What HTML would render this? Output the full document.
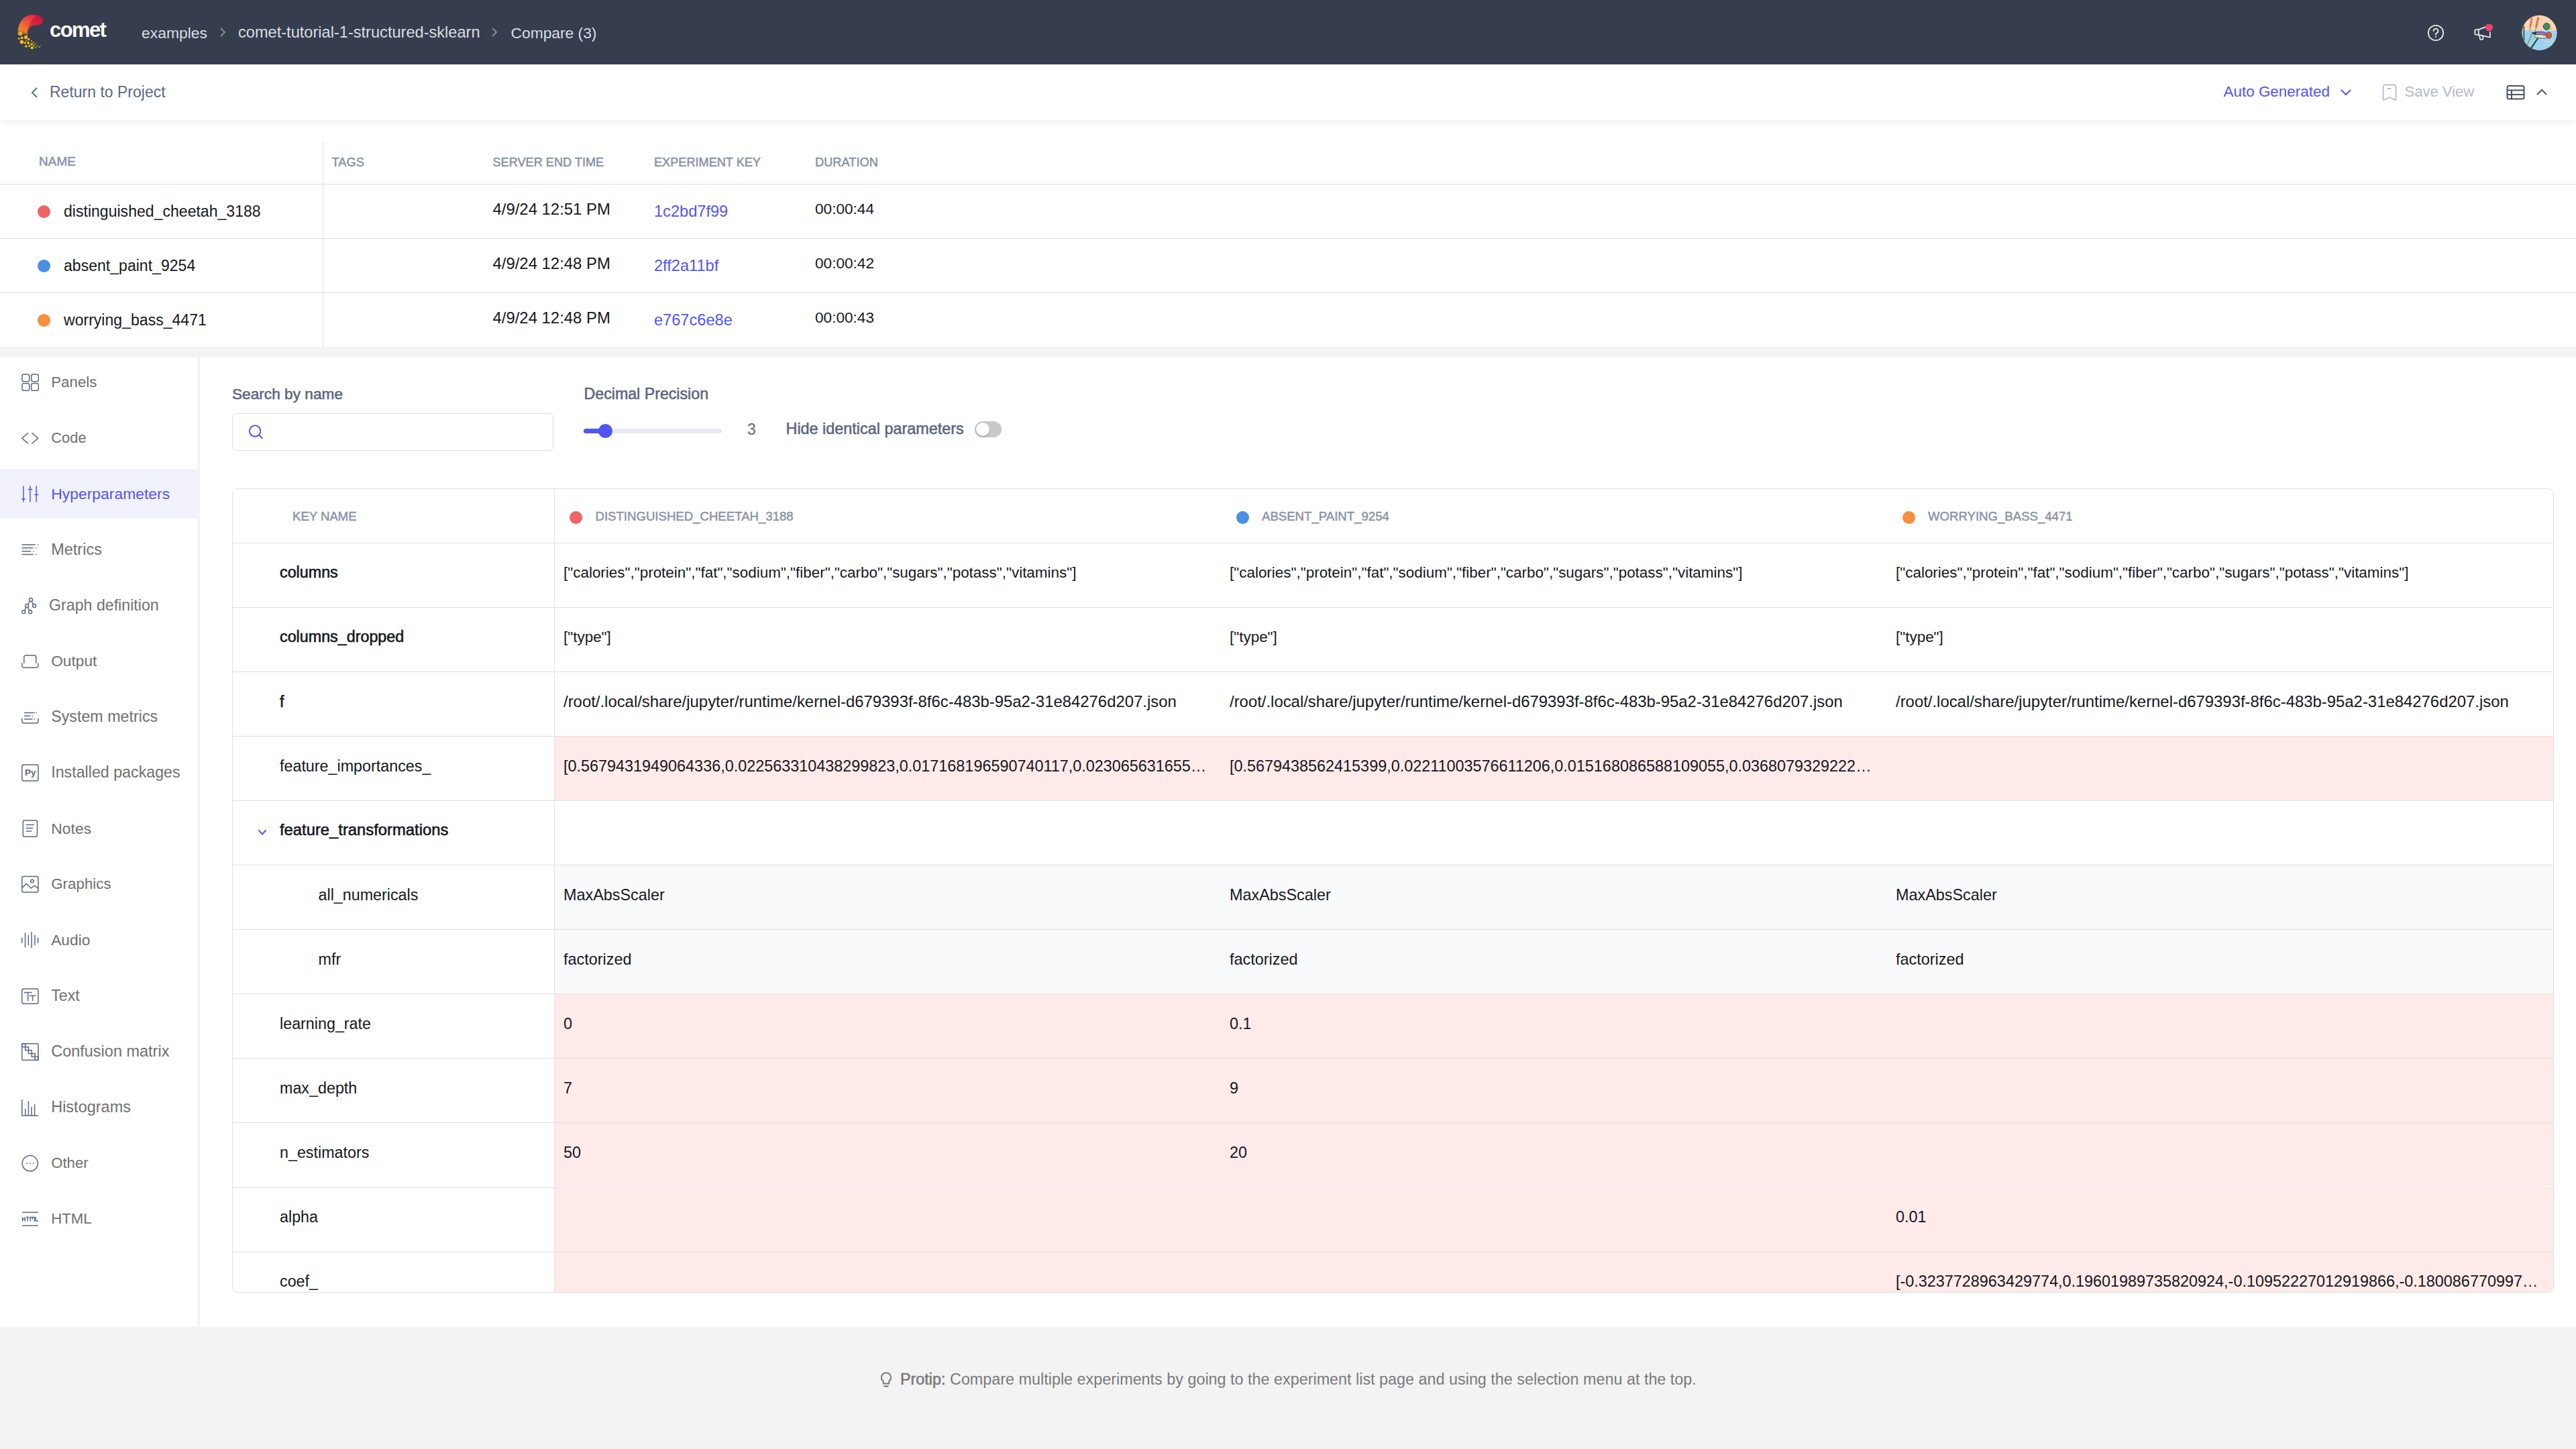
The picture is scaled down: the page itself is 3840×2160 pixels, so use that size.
<!DOCTYPE html>
<html><head><meta charset="utf-8"><title>Comet - Compare</title><style>
*{margin:0;padding:0;box-sizing:border-box}
html,body{width:3840px;height:2160px;overflow:hidden;background:#fff;font-family:"Liberation Sans",sans-serif}
.t{position:absolute;white-space:nowrap;line-height:0}
.r{position:absolute;display:block}
</style></head>
<body>
<div class="r" style="left:0px;top:0px;width:3840px;height:96px;background:#363d4e;"></div>
<svg class="r" style="left:20px;top:16px;" width="50" height="62" viewBox="20 16 50 62"><defs><linearGradient id="lg" gradientUnits="userSpaceOnUse" x1="30" y1="50" x2="52" y2="20"><stop offset="0" stop-color="#f5981f"/><stop offset="0.5" stop-color="#f0543a"/><stop offset="1" stop-color="#ea1a48"/></linearGradient><linearGradient id="lgd" gradientUnits="userSpaceOnUse" x1="0" y1="49" x2="0" y2="73"><stop offset="0" stop-color="#f0a820"/><stop offset="1" stop-color="#ffd500"/></linearGradient></defs><path d="M26.7 47 C27 38 31 30 37.5 25.3 C42 22.5 47 21.8 51 22 C56 22.2 60 23.5 62.5 26 C65 28.5 64.6 33 61.5 35.6 C59.5 37.4 57 37.9 54.5 37.4 C50.5 36.8 46 38.6 43.3 42 C41.5 44.3 40.8 47 40.7 50 C37 51.5 30 50.5 26.7 47z" fill="url(#lg)"/><path d="M56 22.8 C50 26 45.5 32 43 39 C42.2 41.5 41.5 44 41.2 46.5 C41.6 44.6 42.2 43.2 43.3 42 C46 38.6 50.5 36.8 54.5 37.4 C57 37.9 59.5 37.4 61.5 35.6 C64.6 33 65 28.5 62.5 26 C60.7 24.2 58.5 23.2 56 22.8z" fill="#a8103a" opacity="0.45"/><circle cx="30.2" cy="49.8" r="3.8" fill="url(#lgd)" stroke="#363d4e" stroke-width="0.7"/><circle cx="36" cy="49.2" r="1.5" fill="url(#lgd)" stroke="#363d4e" stroke-width="0.7"/><circle cx="40.4" cy="51.2" r="1.2" fill="url(#lgd)" stroke="#363d4e" stroke-width="0.7"/><circle cx="38.6" cy="55.6" r="2.8" fill="url(#lgd)"/><circle cx="32.8" cy="56.5" r="2" fill="url(#lgd)"/><circle cx="28.2" cy="57.4" r="1.5" fill="url(#lgd)"/><circle cx="42.7" cy="58.8" r="1.75" fill="url(#lgd)"/><circle cx="32.5" cy="62.6" r="2.8" fill="url(#lgd)"/><circle cx="37.2" cy="63.8" r="1.6" fill="url(#lgd)"/><circle cx="42.1" cy="64" r="1.9" fill="url(#lgd)"/><circle cx="38.9" cy="60.8" r="1" fill="url(#lgd)"/><circle cx="46.8" cy="60.8" r="1" fill="url(#lgd)"/><circle cx="47.1" cy="66.1" r="1.75" fill="url(#lgd)"/><circle cx="49.4" cy="63.5" r="0.9" fill="url(#lgd)"/><circle cx="52" cy="65.5" r="0.9" fill="url(#lgd)"/><circle cx="38.9" cy="69" r="1.75" fill="url(#lgd)"/><circle cx="43.6" cy="68.4" r="1.5" fill="url(#lgd)"/><circle cx="50.3" cy="68.1" r="1.2" fill="url(#lgd)"/><circle cx="47.7" cy="71.3" r="2" fill="url(#lgd)"/><circle cx="52.9" cy="70.7" r="1" fill="url(#lgd)"/><circle cx="55.5" cy="68.4" r="0.9" fill="url(#lgd)"/><circle cx="58.7" cy="70.2" r="0.9" fill="url(#lgd)"/><circle cx="60.2" cy="67.5" r="0.6" fill="url(#lgd)"/><circle cx="54.7" cy="64" r="0.5" fill="url(#lgd)"/></svg>
<div class="t " style="left:74.00px;top:45.25px;font-size:31px;color:#ffffff;font-weight:700;letter-spacing:-1.6px;">comet</div>
<div class="t " style="left:211.00px;top:48.56px;font-size:22.9px;color:#d9dde4;">examples</div>
<div class="t " style="left:355.00px;top:48.32px;font-size:23.6px;color:#d9dde4;">comet-tutorial-1-structured-sklearn</div>
<div class="t " style="left:761.50px;top:48.60px;font-size:22.8px;color:#d9dde4;">Compare (3)</div>
<svg class="r" style="left:326px;top:40px;" width="12" height="16" viewBox="0 0 12 16"><path d="M3 2 L9 8 L3 14" fill="none" stroke="#8a91a0" stroke-width="1.8"/></svg>
<svg class="r" style="left:731px;top:40px;" width="12" height="16" viewBox="0 0 12 16"><path d="M3 2 L9 8 L3 14" fill="none" stroke="#8a91a0" stroke-width="1.8"/></svg>
<svg class="r" style="left:3617px;top:35px;" width="28" height="28" viewBox="0 0 28 28"><circle cx="14" cy="14" r="11.2" fill="none" stroke="#e8e8e8" stroke-width="1.8"/><path d="M10.6 11.2 a3.4 3.4 0 1 1 4.6 3.2 c-0.9 0.4 -1.2 1 -1.2 1.9 v0.6" fill="none" stroke="#e8e8e8" stroke-width="1.8" stroke-linecap="round"/><circle cx="14" cy="19.8" r="1.1" fill="#e8e8e8"/></svg>
<svg class="r" style="left:3686px;top:36px;" width="30" height="28" viewBox="0 0 30 28"><path d="M8.8 8.2 H5.2 a1.9 1.9 0 0 0 -1.9 1.9 V14 a1.9 1.9 0 0 0 1.9 1.9 H8.8 Z M8.8 8.2 L19.5 4.2 M25.9 11.2 V19.7 L8.8 15.9 M10 16.1 L10.8 21.6 a1.8 1.8 0 0 0 2.2 1.5 L14.4 22.8 a1.5 1.5 0 0 0 1 -1.6 L14.9 17.3" fill="none" stroke="#e8e8e8" stroke-width="1.8" stroke-linejoin="round"/><circle cx="24.4" cy="5" r="5.5" fill="#f0436a"/></svg>
<svg class="r" style="left:3759px;top:22px;" width="54" height="54" viewBox="0 0 54 54"><defs><clipPath id="av"><circle cx="26.5" cy="26.8" r="26"/></clipPath></defs><g clip-path="url(#av)"><rect width="54" height="54" fill="#fcd4b8"/><rect y="23.5" width="54" height="31" fill="#9fd2f0"/><path d="M14 4.5 l2.4 0.4 l-2.2 13.5 l-2.6 -0.3z" fill="#e5703d"/><path d="M23.5 3.5 l2.8 0.6 l-3.6 15.6 l-2.8 -0.6z" fill="#e5703d"/><path d="M13 18 l-1 6 M21.5 19.5 l-1.5 6" stroke="#3d7a3a" stroke-width="0.8"/><path d="M2.5 17 l1.6 0 l0.2 36 l-1.8 0z" fill="#1f5a30"/><path d="M11 52 l16 -23 l1.8 1 l-16 24z" fill="#1f5a30"/><path d="M6 48 l10 -22 l1.2 0.6 l-10 22z" fill="#5a9a5a"/><path d="M14 27 l9 -2 l3 3 l-3 3z" fill="#1f3a2a"/><ellipse cx="31" cy="31.5" rx="12.5" ry="3.6" fill="#e8e4c4" stroke="#24402c" stroke-width="0.8"/><path d="M21 26.5 q9 -3.5 17 1.5 l-1.5 3.2 q-8 -2.5 -15.5 -1.2z" fill="#9a6fc4" stroke="#24402c" stroke-width="0.6"/><ellipse cx="40.5" cy="30.5" rx="4.2" ry="4.8" fill="#d9592f" stroke="#24402c" stroke-width="0.6"/><circle cx="37.2" cy="17.5" r="5" fill="#3d8f63" stroke="#1f3a2a" stroke-width="0.8"/><path d="M41.5 19 l5.5 2.5 l-5.5 0.5z" fill="#e6c34a"/><path d="M33 39 q10 2 18 -1 M36 44 q6 1 12 -1" fill="none" stroke="#e9e4b0" stroke-width="0.8"/></g></svg>
<div class="r" style="left:0px;top:96px;width:3840px;height:83px;background:#ffffff;box-shadow:0 3px 10px rgba(0,0,0,0.07);z-index:2"></div>
<svg class="r" style="left:44px;top:128px;z-index:3" width="16" height="20" viewBox="0 0 16 20"><path d="M11 3 L4 10 L11 17" fill="none" stroke="#5b6785" stroke-width="1.9"/></svg>
<div class="t " style="left:74.00px;top:137.03px;font-size:23.0px;color:#5b6785;z-index:3">Return to Project</div>
<div class="t " style="left:3314.50px;top:137.22px;font-size:22.45px;color:#5155f5;z-index:3">Auto Generated</div>
<svg class="r" style="left:3487px;top:130px;z-index:3" width="20" height="14" viewBox="0 0 20 14"><path d="M3 4 L10 11 L17 4" fill="none" stroke="#5155f5" stroke-width="2"/></svg>
<svg class="r" style="left:3549px;top:124px;z-index:3" width="26" height="28" viewBox="0 0 26 28"><path d="M3.5 6 a3.5 3.5 0 0 1 3.5 -3.5 h12 a3.5 3.5 0 0 1 3.5 3.5 v18 a1 1 0 0 1 -1.5 0.9 L13 21 L5 24.9 a1 1 0 0 1 -1.5 -0.9z" fill="none" stroke="#b8bfd1" stroke-width="1.9"/><path d="M9.5 8 h6" stroke="#b8bfd1" stroke-width="1.9"/></svg>
<div class="t " style="left:3584.60px;top:137.37px;font-size:22.0px;color:#b4bbcd;z-index:3">Save View</div>
<svg class="r" style="left:3735px;top:126px;z-index:3" width="30" height="24" viewBox="0 0 30 24"><rect x="2.5" y="2" width="25" height="19.5" rx="2.5" fill="none" stroke="#4a5166" stroke-width="2"/><path d="M2.5 8.5 h25 M2.5 15 h25 M9 8.5 v13" stroke="#4a5166" stroke-width="2"/></svg>
<svg class="r" style="left:3779px;top:130px;z-index:3" width="20" height="14" viewBox="0 0 20 14"><path d="M3 11 L10 4 L17 11" fill="none" stroke="#555a66" stroke-width="2"/></svg>
<div class="t " style="left:58.00px;top:241.41px;font-size:19.0px;color:#8891a8;-webkit-text-stroke:0.5px #8891a8">NAME</div>
<div class="t " style="left:494.50px;top:241.66px;font-size:18.3px;color:#8891a8;-webkit-text-stroke:0.5px #8891a8">TAGS</div>
<div class="t " style="left:734.50px;top:241.71px;font-size:18.15px;color:#8891a8;-webkit-text-stroke:0.5px #8891a8">SERVER END TIME</div>
<div class="t " style="left:975.00px;top:241.71px;font-size:18.15px;color:#8891a8;-webkit-text-stroke:0.5px #8891a8">EXPERIMENT KEY</div>
<div class="t " style="left:1215.00px;top:241.67px;font-size:18.25px;color:#8891a8;-webkit-text-stroke:0.5px #8891a8">DURATION</div>
<div class="r" style="left:0px;top:274px;width:3840px;height:1px;background:#e0e0e0;"></div>
<div class="r" style="left:0px;top:355px;width:3840px;height:1px;background:#e0e0e0;"></div>
<div class="r" style="left:0px;top:436px;width:3840px;height:1px;background:#e0e0e0;"></div>
<div class="r" style="left:481px;top:211px;width:1px;height:306px;background:#e0e0e0;"></div>
<div class="r" style="left:56px;top:306px;width:19px;height:19px;border-radius:50%;background:#ef6464"></div>
<div class="t " style="left:95.00px;top:314.50px;font-size:23.07px;color:#16181c;">distinguished_cheetah_3188</div>
<div class="t " style="left:734.50px;top:311.71px;font-size:23.9px;color:#16181c;">4/9/24 12:51 PM</div>
<div class="t " style="left:975.00px;top:315.32px;font-size:23.6px;color:#5155f5;">1c2bd7f99</div>
<div class="t " style="left:1215.00px;top:312.16px;font-size:22.6px;color:#16181c;">00:00:44</div>
<div class="r" style="left:56px;top:387px;width:19px;height:19px;border-radius:50%;background:#4a90e2"></div>
<div class="t " style="left:95.00px;top:395.50px;font-size:23.07px;color:#16181c;">absent_paint_9254</div>
<div class="t " style="left:734.50px;top:392.71px;font-size:23.9px;color:#16181c;">4/9/24 12:48 PM</div>
<div class="t " style="left:975.00px;top:396.32px;font-size:23.6px;color:#5155f5;">2ff2a11bf</div>
<div class="t " style="left:1215.00px;top:393.16px;font-size:22.6px;color:#16181c;">00:00:42</div>
<div class="r" style="left:56px;top:468px;width:19px;height:19px;border-radius:50%;background:#f98e3c"></div>
<div class="t " style="left:95.00px;top:476.50px;font-size:23.07px;color:#16181c;">worrying_bass_4471</div>
<div class="t " style="left:734.50px;top:473.71px;font-size:23.9px;color:#16181c;">4/9/24 12:48 PM</div>
<div class="t " style="left:975.00px;top:477.32px;font-size:23.6px;color:#5155f5;">e767c6e8e</div>
<div class="t " style="left:1215.00px;top:474.16px;font-size:22.6px;color:#16181c;">00:00:43</div>
<div class="r" style="left:0px;top:517px;width:3840px;height:16px;background:#f3f3f3;"></div>
<div class="r" style="left:294px;top:533px;width:4px;height:1445px;background:#f3f3f3;"></div>
<div class="r" style="left:0px;top:1978px;width:3840px;height:182px;background:#f3f3f3;"></div>
<div class="r" style="left:0px;top:699px;width:294px;height:73.5px;background:#f2f2fd;"></div>
<div class="t " style="left:76.20px;top:569.76px;font-size:22.32px;color:#707070;">Panels</div>
<svg class="r" style="left:32px;top:557.0px;" width="26" height="26" viewBox="0 0 26 26"><rect x="1" y="0.9" width="10.7" height="10.8" rx="2.6" fill="none" stroke="#5d6782" stroke-width="1.5"/><rect x="14.7" y="0.9" width="10.7" height="10.8" rx="2.6" fill="none" stroke="#5d6782" stroke-width="1.5"/><rect x="1" y="14.5" width="10.7" height="10.8" rx="2.6" fill="none" stroke="#5d6782" stroke-width="1.5"/><rect x="14.7" y="14.5" width="10.7" height="10.8" rx="2.6" fill="none" stroke="#5d6782" stroke-width="1.5"/></svg>
<div class="t " style="left:76.20px;top:653.00px;font-size:22.0px;color:#707070;">Code</div>
<svg class="r" style="left:32px;top:640.13px;" width="26" height="26" viewBox="0 0 26 26"><path d="M9.8 5.4 L0.9 13.3 L9.8 21.1 M15.6 5.4 L24.6 13.3 L15.6 21.1" fill="none" stroke="#5d6782" stroke-width="1.5"/></svg>
<div class="t " style="left:76.20px;top:735.82px;font-size:22.91px;color:#5155f5;">Hyperparameters</div>
<svg class="r" style="left:32px;top:723.26px;" width="26" height="26" viewBox="0 0 26 26"><path d="M3 1.2 V25.6 M12.9 1.2 V25.6 M22.2 1.2 V25.6 M0 20.8 H6 M10 6.5 H16 M19.2 14.4 H25.4" fill="none" stroke="#5155f5" stroke-width="1.5" stroke-width="1.7"/></svg>
<div class="t " style="left:76.20px;top:818.74px;font-size:23.5px;color:#707070;">Metrics</div>
<svg class="r" style="left:32px;top:806.39px;" width="26" height="26" viewBox="0 0 26 26"><path d="M0.4 6 H20.9 M0.4 10.8 H17.4 M0.4 15.7 H14 M0.4 20.4 H17.9" fill="none" stroke="#5d6782" stroke-width="1.5"/><path d="M24 6 h1.4 M20.8 10.8 h1.4 M17.5 15.7 h1.4 M20.8 20.4 h1.4" fill="none" stroke="#5d6782" stroke-width="1.5"/></svg>
<div class="t " style="left:73.00px;top:901.98px;font-size:23.2px;color:#707070;">Graph definition</div>
<svg class="r" style="left:32px;top:889.52px;" width="26" height="26" viewBox="0 0 26 26"><circle cx="14" cy="4" r="2.5" fill="none" stroke="#5d6782" stroke-width="1.5"/><circle cx="8.2" cy="13.1" r="2.5" fill="none" stroke="#5d6782" stroke-width="1.5"/><circle cx="19" cy="13.1" r="2.5" fill="none" stroke="#5d6782" stroke-width="1.5"/><circle cx="3.2" cy="22.3" r="2.5" fill="none" stroke="#5d6782" stroke-width="1.5"/><circle cx="13.1" cy="22.3" r="2.5" fill="none" stroke="#5d6782" stroke-width="1.5"/><path d="M12.7 6.2 L9.5 10.9 M15.2 6.3 L17.8 10.8 M6.9 15.3 L4.5 20.1 M9.4 15.3 L11.9 20.1" fill="none" stroke="#5d6782" stroke-width="1.5"/></svg>
<div class="t " style="left:76.20px;top:985.27px;font-size:22.74px;color:#707070;">Output</div>
<svg class="r" style="left:32px;top:972.65px;" width="26" height="26" viewBox="0 0 26 26"><path d="M3.8 15.8 V6.6 a2.5 2.5 0 0 1 2.5 -2.5 H19.2 a2.5 2.5 0 0 1 2.5 2.5 V15.8" fill="none" stroke="#5d6782" stroke-width="1.5"/><path d="M0.8 15.3 V19.2 a3 3 0 0 0 3 3 H22 a3 3 0 0 0 3 -3 V15.3" fill="none" stroke="#5d6782" stroke-width="1.5"/></svg>
<div class="t " style="left:76.20px;top:1068.21px;font-size:23.27px;color:#707070;">System metrics</div>
<svg class="r" style="left:32px;top:1055.78px;" width="26" height="26" viewBox="0 0 26 26"><path d="M4 6.4 H19.8 M4 11.3 H13.4 M4 16 H16.5" fill="none" stroke="#5d6782" stroke-width="1.5"/><path d="M21.6 6.4 h1.4 M15.6 11.3 h1.4 M18.6 16 h1.4" fill="none" stroke="#5d6782" stroke-width="1.5"/><path d="M0.8 14.7 V19 a3 3 0 0 0 3 3 H22 a3 3 0 0 0 3 -3 V14.7" fill="none" stroke="#5d6782" stroke-width="1.5"/></svg>
<div class="t " style="left:76.20px;top:1151.35px;font-size:23.24px;color:#707070;">Installed packages</div>
<svg class="r" style="left:32px;top:1138.91px;" width="26" height="26" viewBox="0 0 26 26"><rect x="0.8" y="1" width="24.2" height="24" rx="2.5" fill="none" stroke="#5d6782" stroke-width="1.5"/><text x="5" y="17" font-family="Liberation Sans" font-weight="700" font-size="13.5" fill="#5d6782">Py</text></svg>
<div class="t " style="left:76.20px;top:1234.58px;font-size:22.97px;color:#707070;">Notes</div>
<svg class="r" style="left:32px;top:1222.04px;" width="26" height="26" viewBox="0 0 26 26"><rect x="2.3" y="1" width="21.2" height="24.2" rx="2.5" fill="none" stroke="#5d6782" stroke-width="1.5"/><path d="M6.7 7.5 H18.7 M6.7 12.4 H17 M6.7 17.1 H15.3" fill="none" stroke="#5d6782" stroke-width="1.5"/></svg>
<div class="t " style="left:76.20px;top:1317.91px;font-size:22.37px;color:#707070;">Graphics</div>
<svg class="r" style="left:32px;top:1305.17px;" width="26" height="26" viewBox="0 0 26 26"><rect x="0.8" y="1.4" width="24.2" height="23.6" rx="2.5" fill="none" stroke="#5d6782" stroke-width="1.5"/><circle cx="16" cy="8.5" r="2.3" fill="none" stroke="#5d6782" stroke-width="1.5"/><path d="M0.8 18.6 L7.3 12.3 L14.4 19 L19.4 15.1 L25 19.4" fill="none" stroke="#5d6782" stroke-width="1.5"/></svg>
<div class="t " style="left:76.20px;top:1400.90px;font-size:22.78px;color:#707070;">Audio</div>
<svg class="r" style="left:32px;top:1388.3px;" width="26" height="26" viewBox="0 0 26 26"><path d="M0.8 9.4 V17.9 M5.5 2.4 V24.2 M10.3 5.8 V21.1 M15.1 1.2 V25.3 M20 5.8 V21.1 M24.6 9.4 V17.9" fill="none" stroke="#5d6782" stroke-width="1.5"/></svg>
<div class="t " style="left:76.20px;top:1483.90px;font-size:23.17px;color:#707070;">Text</div>
<svg class="r" style="left:32px;top:1471.43px;" width="26" height="26" viewBox="0 0 26 26"><rect x="0.8" y="2.9" width="24.2" height="22.4" rx="2.5" fill="none" stroke="#5d6782" stroke-width="1.5"/><path d="M4.5 9.6 V8.5 H14.8 V9.6 M9.7 8.5 V21 M12.7 14.2 V13.2 H20.4 V14.2 M16.6 13.2 V21" fill="none" stroke="#5d6782" stroke-width="1.5"/></svg>
<div class="t " style="left:76.20px;top:1566.92px;font-size:23.49px;color:#707070;">Confusion matrix</div>
<svg class="r" style="left:32px;top:1554.56px;" width="26" height="26" viewBox="0 0 26 26"><rect x="0.8" y="0.8" width="24.2" height="24.5" rx="1.2" fill="none" stroke="#5d6782" stroke-width="1.5"/><rect x="0.80" y="0.80" width="4.84" height="4.9" fill="none" stroke="#5d6782" stroke-width="1.5" stroke-width="1.3"/><rect x="5.64" y="5.70" width="4.84" height="4.9" fill="none" stroke="#5d6782" stroke-width="1.5" stroke-width="1.3"/><rect x="10.48" y="10.60" width="4.84" height="4.9" fill="none" stroke="#5d6782" stroke-width="1.5" stroke-width="1.3"/><rect x="15.32" y="15.50" width="4.84" height="4.9" fill="none" stroke="#5d6782" stroke-width="1.5" stroke-width="1.3"/><rect x="20.16" y="20.40" width="4.84" height="4.9" fill="none" stroke="#5d6782" stroke-width="1.5" stroke-width="1.3"/></svg>
<div class="t " style="left:76.20px;top:1650.05px;font-size:23.49px;color:#707070;">Histograms</div>
<svg class="r" style="left:32px;top:1637.69px;" width="26" height="26" viewBox="0 0 26 26"><path d="M0.8 1 V25.1 H24.8 M5.8 25.1 V15.1 M10.4 25.1 V3.5 M15 25.1 V12.1 M19.6 25.1 V7.8" fill="none" stroke="#5d6782" stroke-width="1.5"/></svg>
<div class="t " style="left:76.20px;top:1733.62px;font-size:22.2px;color:#707070;">Other</div>
<svg class="r" style="left:32px;top:1720.82px;" width="26" height="26" viewBox="0 0 26 26"><circle cx="12.8" cy="13.2" r="11.6" fill="none" stroke="#5d6782" stroke-width="1.5"/><circle cx="8" cy="13.2" r="0.9" fill="#5d6782"/><circle cx="12.8" cy="13.2" r="0.9" fill="#5d6782"/><circle cx="17.8" cy="13.2" r="0.9" fill="#5d6782"/></svg>
<div class="t " style="left:76.20px;top:1816.74px;font-size:22.23px;color:#707070;">HTML</div>
<svg class="r" style="left:32px;top:1803.95px;" width="26" height="26" viewBox="0 0 26 26"><path d="M1.2 3.3 H24.8 M1.2 23 H24.8" fill="none" stroke="#5d6782" stroke-width="1.5" stroke-width="1.7"/><path d="M1.6 10.3 V16.4 M5.2 10.3 V16.4 M1.6 13.3 H5.2 M6.8 10.6 H11.5 M9.15 10.6 V16.4 M13.2 16.4 V10.6 H19.4 V16.4 M16.3 10.6 V13.8 M21.3 10.3 V16.1 H25" fill="none" stroke="#5d6782" stroke-width="1.5" stroke-width="1.3"/></svg>
<div class="t " style="left:346.00px;top:587.14px;font-size:22.66px;color:#5b6580;-webkit-text-stroke:0.55px #5b6580">Search by name</div>
<div class="r" style="left:346px;top:615.5px;width:479px;height:56px;border:1.5px solid #dcdfea;border-radius:6px;background:#fff"></div>
<svg class="r" style="left:369px;top:631px;" width="26" height="26" viewBox="0 0 26 26"><circle cx="11.1" cy="11.5" r="8.2" fill="none" stroke="#5155f5" stroke-width="2"/><path d="M17 17.4 L22.3 22.7" stroke="#5155f5" stroke-width="2"/></svg>
<div class="t " style="left:870.50px;top:587.46px;font-size:23.2px;color:#5b6580;-webkit-text-stroke:0.55px #5b6580">Decimal Precision</div>
<div class="r" style="left:870px;top:638.5px;width:205.5px;height:7px;background:#e8e9ee;border-radius:4px"></div>
<div class="r" style="left:870px;top:638.5px;width:32px;height:7px;background:#5155f5;border-radius:4px"></div>
<div class="r" style="left:892px;top:631.5px;width:21px;height:21px;border-radius:50%;background:#5155f5"></div>
<div class="t " style="left:1114.00px;top:639.53px;font-size:23px;color:#666666;">3</div>
<div class="t " style="left:1171.50px;top:639.39px;font-size:23.4px;color:#5b6580;-webkit-text-stroke:0.55px #5b6580">Hide identical parameters</div>
<div class="r" style="left:1452.5px;top:627.5px;width:40px;height:24px;border-radius:12px;background:#c9c9c9"></div>
<div class="r" style="left:1454.5px;top:629.5px;width:20px;height:20px;border-radius:50%;background:#fff;box-shadow:0 1px 2px rgba(0,0,0,.3)"></div>
<div class="r" style="left:346px;top:728px;width:3461px;height:1199px;border:1px solid #e0e0e0;border-radius:8px;overflow:hidden;background:#fff" id="pt">
<div class="t" style="left:89.00px;top:40.55px;font-size:18.6px;color:#8891a8;-webkit-text-stroke:0.45px #8891a8">KEY NAME</div>
<div class="t" style="left:540.50px;top:40.55px;font-size:18.6px;color:#8891a8;-webkit-text-stroke:0.45px #8891a8">DISTINGUISHED_CHEETAH_3188</div>
<div class="r" style="left:501.5px;top:32.5px;width:19px;height:19px;border-radius:50%;background:#ef6464"></div>
<div class="t" style="left:1534.00px;top:40.55px;font-size:18.6px;color:#8891a8;-webkit-text-stroke:0.45px #8891a8">ABSENT_PAINT_9254</div>
<div class="r" style="left:1496.0px;top:32.5px;width:19px;height:19px;border-radius:50%;background:#4a90e2"></div>
<div class="t" style="left:2527.00px;top:40.55px;font-size:18.6px;color:#8891a8;-webkit-text-stroke:0.45px #8891a8">WORRYING_BASS_4471</div>
<div class="r" style="left:2488.5px;top:32.5px;width:19px;height:19px;border-radius:50%;background:#f98e3c"></div>
<div class="r" style="left:0;top:80.00px;width:100%;height:1px;background:#e0e0e0"></div>
<div class="t" style="left:70px;top:124.42px;font-size:23.3px;color:#16181c;-webkit-text-stroke:0.6px #16181c">columns</div>
<div class="t" style="left:493px;top:125.22px;font-size:22.45px;color:#16181c;width:959px;overflow:hidden;text-overflow:ellipsis;line-height:30px;margin-top:-15px">[&quot;calories&quot;,&quot;protein&quot;,&quot;fat&quot;,&quot;sodium&quot;,&quot;fiber&quot;,&quot;carbo&quot;,&quot;sugars&quot;,&quot;potass&quot;,&quot;vitamins&quot;]</div>
<div class="t" style="left:1486px;top:125.22px;font-size:22.45px;color:#16181c;width:959px;overflow:hidden;text-overflow:ellipsis;line-height:30px;margin-top:-15px">[&quot;calories&quot;,&quot;protein&quot;,&quot;fat&quot;,&quot;sodium&quot;,&quot;fiber&quot;,&quot;carbo&quot;,&quot;sugars&quot;,&quot;potass&quot;,&quot;vitamins&quot;]</div>
<div class="t" style="left:2479px;top:125.22px;font-size:22.45px;color:#16181c;width:967px;overflow:hidden;text-overflow:ellipsis;line-height:30px;margin-top:-15px">[&quot;calories&quot;,&quot;protein&quot;,&quot;fat&quot;,&quot;sodium&quot;,&quot;fiber&quot;,&quot;carbo&quot;,&quot;sugars&quot;,&quot;potass&quot;,&quot;vitamins&quot;]</div>
<div class="r" style="left:0;top:176.05px;width:100%;height:1px;background:#e0e0e0"></div>
<div class="t" style="left:70px;top:220.47px;font-size:23.3px;color:#16181c;-webkit-text-stroke:0.6px #16181c">columns_dropped</div>
<div class="t" style="left:493px;top:221.27px;font-size:22.45px;color:#16181c;width:959px;overflow:hidden;text-overflow:ellipsis;line-height:30px;margin-top:-15px">[&quot;type&quot;]</div>
<div class="t" style="left:1486px;top:221.27px;font-size:22.45px;color:#16181c;width:959px;overflow:hidden;text-overflow:ellipsis;line-height:30px;margin-top:-15px">[&quot;type&quot;]</div>
<div class="t" style="left:2479px;top:221.27px;font-size:22.45px;color:#16181c;width:967px;overflow:hidden;text-overflow:ellipsis;line-height:30px;margin-top:-15px">[&quot;type&quot;]</div>
<div class="r" style="left:0;top:272.10px;width:100%;height:1px;background:#e0e0e0"></div>
<div class="t" style="left:70px;top:316.52px;font-size:23.3px;color:#16181c;-webkit-text-stroke:0.6px #16181c">f</div>
<div class="t" style="left:493px;top:316.81px;font-size:23.9px;color:#16181c;width:959px;overflow:hidden;text-overflow:ellipsis;line-height:30px;margin-top:-15px">/root/.local/share/jupyter/runtime/kernel-d679393f-8f6c-483b-95a2-31e84276d207.json</div>
<div class="t" style="left:1486px;top:316.81px;font-size:23.9px;color:#16181c;width:959px;overflow:hidden;text-overflow:ellipsis;line-height:30px;margin-top:-15px">/root/.local/share/jupyter/runtime/kernel-d679393f-8f6c-483b-95a2-31e84276d207.json</div>
<div class="t" style="left:2479px;top:316.81px;font-size:23.9px;color:#16181c;width:967px;overflow:hidden;text-overflow:ellipsis;line-height:30px;margin-top:-15px">/root/.local/share/jupyter/runtime/kernel-d679393f-8f6c-483b-95a2-31e84276d207.json</div>
<div class="r" style="left:479px;top:368.15px;width:2981px;height:96px;background:#ffeaea"></div>
<div class="r" style="left:0;top:368.15px;width:100%;height:1px;background:#e0e0e0"></div>
<div class="t" style="left:70px;top:412.57px;font-size:23.3px;color:#16181c;">feature_importances_</div>
<div class="t" style="left:493px;top:413.04px;font-size:23.4px;color:#16181c;width:959px;overflow:hidden;text-overflow:ellipsis;line-height:30px;margin-top:-15px">[0.5679431949064336,0.022563310438299823,0.017168196590740117,0.023065631655878123,0.0112]</div>
<div class="t" style="left:1486px;top:413.04px;font-size:23.4px;color:#16181c;width:959px;overflow:hidden;text-overflow:ellipsis;line-height:30px;margin-top:-15px">[0.5679438562415399,0.02211003576611206,0.015168086588109055,0.03680793292221356,0.0112]</div>
<div class="r" style="left:0;top:464.20px;width:100%;height:1px;background:#e0e0e0"></div>
<div class="t" style="left:70px;top:508.45px;font-size:23.8px;color:#16181c;-webkit-text-stroke:0.6px #16181c">feature_transformations</div>
<div class="r" style="left:479px;top:560.25px;width:2981px;height:96px;background:#f9fafc"></div>
<div class="r" style="left:0;top:560.25px;width:100%;height:1px;background:#e0e0e0"></div>
<div class="t" style="left:127.5px;top:604.67px;font-size:23.3px;color:#16181c;">all_numericals</div>
<div class="t" style="left:493px;top:605.14px;font-size:23.4px;color:#16181c;width:959px;overflow:hidden;text-overflow:ellipsis;line-height:30px;margin-top:-15px">MaxAbsScaler </div>
<div class="t" style="left:1486px;top:605.14px;font-size:23.4px;color:#16181c;width:959px;overflow:hidden;text-overflow:ellipsis;line-height:30px;margin-top:-15px">MaxAbsScaler </div>
<div class="t" style="left:2479px;top:605.14px;font-size:23.4px;color:#16181c;width:967px;overflow:hidden;text-overflow:ellipsis;line-height:30px;margin-top:-15px">MaxAbsScaler </div>
<div class="r" style="left:479px;top:656.30px;width:2981px;height:96px;background:#f9fafc"></div>
<div class="r" style="left:0;top:656.30px;width:100%;height:1px;background:#e0e0e0"></div>
<div class="t" style="left:127.5px;top:700.72px;font-size:23.3px;color:#16181c;">mfr</div>
<div class="t" style="left:493px;top:701.19px;font-size:23.4px;color:#16181c;width:959px;overflow:hidden;text-overflow:ellipsis;line-height:30px;margin-top:-15px">factorized</div>
<div class="t" style="left:1486px;top:701.19px;font-size:23.4px;color:#16181c;width:959px;overflow:hidden;text-overflow:ellipsis;line-height:30px;margin-top:-15px">factorized</div>
<div class="t" style="left:2479px;top:701.19px;font-size:23.4px;color:#16181c;width:967px;overflow:hidden;text-overflow:ellipsis;line-height:30px;margin-top:-15px">factorized</div>
<div class="r" style="left:479px;top:752.35px;width:2981px;height:96px;background:#ffeaea"></div>
<div class="r" style="left:0;top:752.35px;width:100%;height:1px;background:#e0e0e0"></div>
<div class="t" style="left:70px;top:796.77px;font-size:23.3px;color:#16181c;">learning_rate</div>
<div class="t" style="left:493px;top:797.24px;font-size:23.4px;color:#16181c;width:959px;overflow:hidden;text-overflow:ellipsis;line-height:30px;margin-top:-15px">0</div>
<div class="t" style="left:1486px;top:797.24px;font-size:23.4px;color:#16181c;width:959px;overflow:hidden;text-overflow:ellipsis;line-height:30px;margin-top:-15px">0.1</div>
<div class="r" style="left:479px;top:848.40px;width:2981px;height:96px;background:#ffeaea"></div>
<div class="r" style="left:0;top:848.40px;width:100%;height:1px;background:#e0e0e0"></div>
<div class="t" style="left:70px;top:892.82px;font-size:23.3px;color:#16181c;">max_depth</div>
<div class="t" style="left:493px;top:893.29px;font-size:23.4px;color:#16181c;width:959px;overflow:hidden;text-overflow:ellipsis;line-height:30px;margin-top:-15px">7</div>
<div class="t" style="left:1486px;top:893.29px;font-size:23.4px;color:#16181c;width:959px;overflow:hidden;text-overflow:ellipsis;line-height:30px;margin-top:-15px">9</div>
<div class="r" style="left:479px;top:944.45px;width:2981px;height:96px;background:#ffeaea"></div>
<div class="r" style="left:0;top:944.45px;width:100%;height:1px;background:#e0e0e0"></div>
<div class="t" style="left:70px;top:988.87px;font-size:23.3px;color:#16181c;">n_estimators</div>
<div class="t" style="left:493px;top:989.34px;font-size:23.4px;color:#16181c;width:959px;overflow:hidden;text-overflow:ellipsis;line-height:30px;margin-top:-15px">50</div>
<div class="t" style="left:1486px;top:989.34px;font-size:23.4px;color:#16181c;width:959px;overflow:hidden;text-overflow:ellipsis;line-height:30px;margin-top:-15px">20</div>
<div class="r" style="left:479px;top:1040.50px;width:2981px;height:96px;background:#ffeaea"></div>
<div class="r" style="left:0;top:1040.50px;width:100%;height:1px;background:#e0e0e0"></div>
<div class="t" style="left:70px;top:1084.92px;font-size:23.3px;color:#16181c;">alpha</div>
<div class="t" style="left:2479px;top:1085.39px;font-size:23.4px;color:#16181c;width:967px;overflow:hidden;text-overflow:ellipsis;line-height:30px;margin-top:-15px">0.01</div>
<div class="r" style="left:479px;top:1136.55px;width:2981px;height:96px;background:#ffeaea"></div>
<div class="r" style="left:0;top:1136.55px;width:100%;height:1px;background:#e0e0e0"></div>
<div class="t" style="left:70px;top:1180.97px;font-size:23.3px;color:#16181c;">coef_</div>
<div class="t" style="left:2479px;top:1181.44px;font-size:23.4px;color:#16181c;width:967px;overflow:hidden;text-overflow:ellipsis;line-height:30px;margin-top:-15px">[-0.3237728963429774,0.19601989735820924,-0.10952227012919866,-0.18008677099786123,0.0112]</div>
<div class="r" style="left:479px;top:0;width:1px;height:100%;background:#e0e0e0"></div>
</div>
<svg class="r" style="left:1310px;top:2044px;" width="22" height="27" viewBox="0 0 22 27"><path d="M11 2.5 a7 7 0 0 0 -4.2 12.6 v3.4 h8.4 v-3.4 A7 7 0 0 0 11 2.5z" fill="none" stroke="#7a7a7a" stroke-width="2"/><path d="M7.5 22.5 h7" stroke="#7a7a7a" stroke-width="2.2"/></svg>
<div class="t " style="left:1342.00px;top:2055.65px;font-size:23.37px;color:#7a7a7a;"><b style="font-weight:400;-webkit-text-stroke:0.6px #7a7a7a">Protip:</b> Compare multiple experiments by going to the experiment list page and using the selection menu at the top.</div>
<svg class="r" style="left:383px;top:1234px;" width="16" height="14" viewBox="0 0 16 14"><path d="M2.5 3.5 L8 9.5 L13.5 3.5" fill="none" stroke="#5155f5" stroke-width="1.9"/></svg>
</body></html>
